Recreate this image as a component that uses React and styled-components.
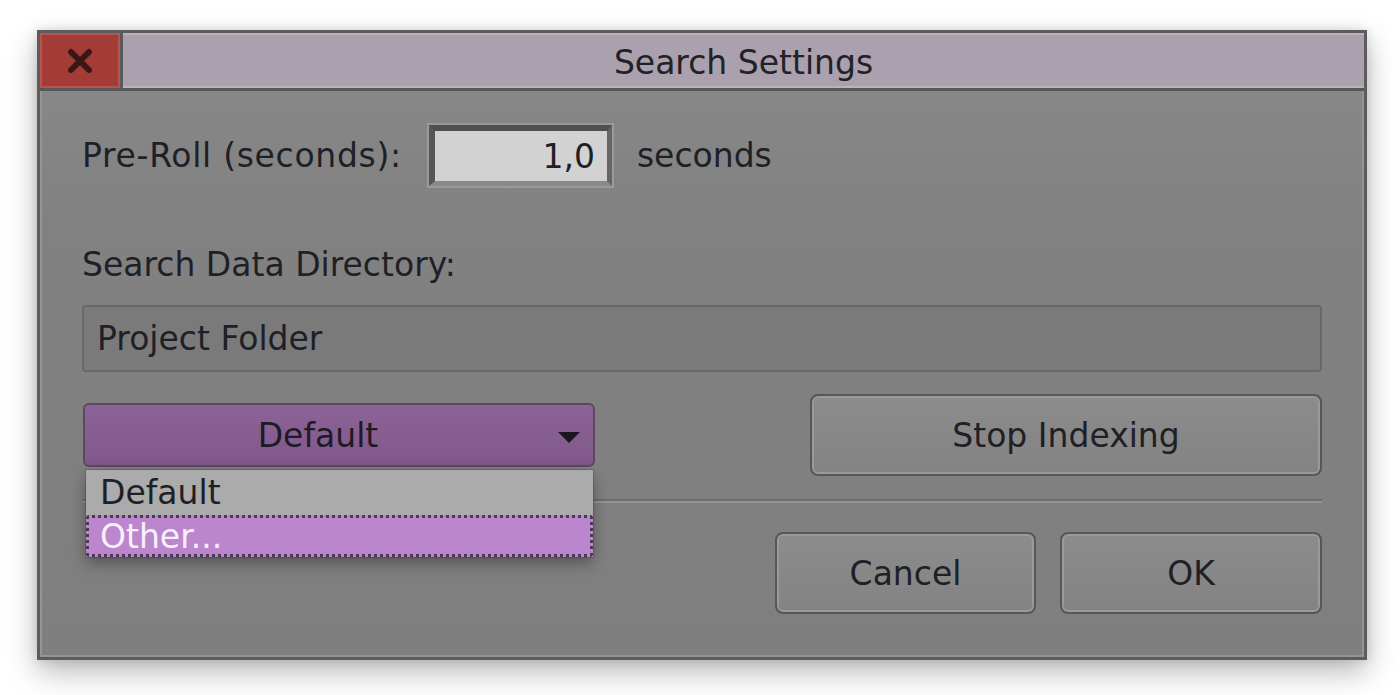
import React from 'react'
import styled, { createGlobalStyle } from 'styled-components'

const Global = createGlobalStyle`
  html, body {
    margin: 0;
    padding: 0;
    background: #ffffff;
  }
  body {
    font-family: "DejaVu Sans", "Liberation Sans", sans-serif;
  }
`

const Page = styled.div`
  width: 1400px;
  height: 695px;
  padding: 30px 0 0 37px;
  box-sizing: border-box;
  overflow: hidden;
`

const Window = styled.div`
  width: 1330px;
  height: 630px;
  box-sizing: border-box;
  border: 3px solid #5c5c5c;
  display: flex;
  flex-direction: column;
  background: linear-gradient(#8a8a8a, #818181 30%, #7f7f7f);
  box-shadow: 0 12px 28px rgba(0, 0, 0, 0.28), 0 0 10px rgba(0, 0, 0, 0.12);
`

const TitleBar = styled.div`
  height: 55px;
  display: flex;
  background: #aba0ad;
  border-bottom: 3px solid #585858;
  box-shadow: inset 0 2px 0 #bcb2bd, inset 0 -2px 0 #bcb2bd;
`

const CloseButton = styled.div`
  width: 80px;
  display: flex;
  align-items: center;
  justify-content: center;
  background: #a33b36;
  border-right: 3px solid #5a5a5a;
  box-shadow: inset 0 0 0 2px #b65450;
`

const Title = styled.div`
  flex: 1;
  display: flex;
  align-items: center;
  justify-content: center;
  padding-top: 3px;
  font-size: 33px;
  color: #222226;
`

const Body = styled.div`
  flex: 1;
  display: flex;
  flex-direction: column;
  padding: 32px 42px 0 42px;
  box-shadow: inset 2px 0 0 #959595, inset -2px 0 0 #959595, inset 0 -2px 0 #959595;
`

const Row = styled.div`
  display: flex;
  align-items: center;
  gap: ${p => p.gap || 0}px;
  justify-content: ${p => p.justify || 'flex-start'};
  margin-top: ${p => p.top || 0}px;
  position: relative;
`

const Label = styled.div`
  font-size: 33px;
  line-height: 40px;
  color: #1f1f26;
  letter-spacing: ${p => p.spacing || 0}px;
  margin-top: ${p => p.top || 0}px;
`

const NumberField = styled.div`
  width: 187px;
  height: 65px;
  box-sizing: border-box;
  margin: 0 23px 0 25px;
  border: 2px solid #9a9a9a;
  display: flex;
`

const NumberInner = styled.div`
  flex: 1;
  border-style: solid;
  border-width: 6px 5px 5px 6px;
  border-color: #4f4f4f #666666 #8a8a8a #565656;
  background: #d2d2d2;
  display: flex;
  align-items: center;
  justify-content: flex-end;
  padding-right: 12px;
  font-size: 33px;
  color: #1f1f26;
`

const PathField = styled.div`
  margin-top: 20px;
  height: 67px;
  box-sizing: border-box;
  border: 2px solid #686868;
  border-radius: 4px;
  background: #7a7a7a;
  display: flex;
  align-items: center;
  padding-left: 13px;
  font-size: 33px;
  color: #1f1f26;
`

const SelectWrap = styled.div`
  position: relative;
  margin-left: 1px;
`

const SelectButton = styled.div`
  width: 512px;
  height: 64px;
  box-sizing: border-box;
  border: 2px solid #5b4861;
  border-radius: 6px;
  background: linear-gradient(#8d6397, #7f5889);
  display: flex;
  align-items: center;
  justify-content: center;
  padding-right: 42px;
  position: relative;
  font-size: 33px;
  color: #1f1a26;
`

const Caret = styled.div`
  position: absolute;
  right: 13px;
  top: 27px;
  width: 0;
  height: 0;
  border-left: 11px solid transparent;
  border-right: 11px solid transparent;
  border-top: 11px solid #1c1622;
`

const Menu = styled.div`
  position: absolute;
  top: 67px;
  left: 3px;
  width: 507px;
  background: #ababab;
  box-shadow: 0 6px 14px rgba(0, 0, 0, 0.35), 0 0 0 1px #6e6e6e;
  z-index: 10;
`

const MenuItem = styled.div`
  height: ${p => (p.selected ? 42 : 45)}px;
  box-sizing: border-box;
  display: flex;
  align-items: center;
  padding-left: ${p => (p.selected ? 11 : 14)}px;
  font-size: 33px;
  color: ${p => (p.selected ? '#f6f0f8' : '#1f1f26')};
  background: ${p => (p.selected ? '#bb86cd' : 'transparent')};
  border: ${p => (p.selected ? '3px dotted #4a3a52' : 'none')};
  border-radius: ${p => (p.selected ? '3px' : '0')};
`

const Button = styled.div`
  width: ${p => p.w}px;
  height: 82px;
  box-sizing: border-box;
  border: 2px solid #575757;
  border-radius: 8px;
  background: linear-gradient(#8c8c8c, #838383);
  box-shadow: inset 0 0 0 2px #9a9a9a;
  display: flex;
  align-items: center;
  justify-content: center;
  font-size: 33px;
  color: #1f1f26;
`

const Separator = styled.div`
  margin-top: 23px;
  height: 2px;
  background: #6c6c6c;
  border-bottom: 2px solid #959595;
`

function CloseIcon() {
  return (
    <svg width="28" height="28" viewBox="0 0 28 28">
      <path d="M5 5 L23 23 M23 5 L5 23" stroke="#3a1715" strokeWidth="6" strokeLinecap="round" />
    </svg>
  )
}

export default function App() {
  return (
    <Page>
      <Global />
      <Window>
        <TitleBar>
          <CloseButton>
            <CloseIcon />
          </CloseButton>
          <Title>Search Settings</Title>
        </TitleBar>
        <Body>
          <Row>
            <Label spacing={0.7}>Pre-Roll (seconds):</Label>
            <NumberField>
              <NumberInner>1,0</NumberInner>
            </NumberField>
            <Label>seconds</Label>
          </Row>

          <Label top={57}>Search Data Directory:</Label>
          <PathField>Project Folder</PathField>

          <Row top={22} justify="space-between">
            <SelectWrap>
              <SelectButton>
                Default
                <Caret />
              </SelectButton>
              <Menu>
                <MenuItem>Default</MenuItem>
                <MenuItem selected>Other...</MenuItem>
              </Menu>
            </SelectWrap>
            <Button w={512}>Stop Indexing</Button>
          </Row>

          <Separator />

          <Row top={29} gap={24} justify="flex-end">
            <Button w={261}>Cancel</Button>
            <Button w={262}>OK</Button>
          </Row>
        </Body>
      </Window>
    </Page>
  )
}
